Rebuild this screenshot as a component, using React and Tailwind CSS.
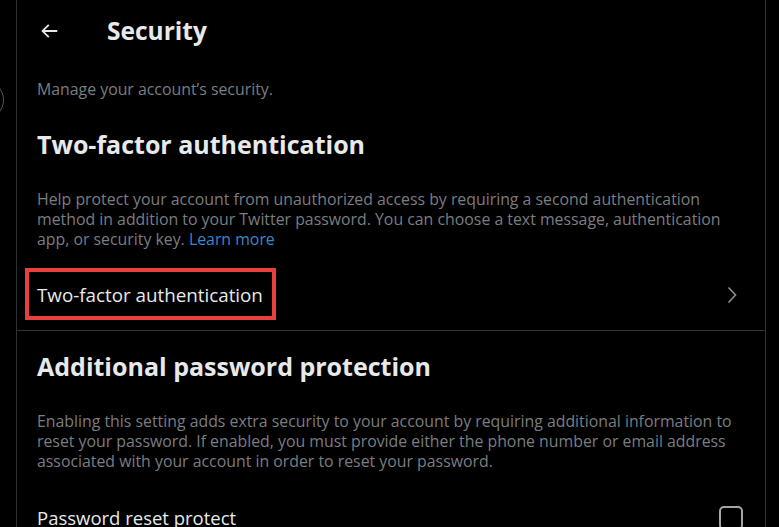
import React from 'react';

const font = { fontFamily: '"Open Sans", "Liberation Sans", sans-serif' };

function BackArrow() {
  return (
    <svg viewBox="0 0 24 24" className="w-[22px] h-[22px]" fill="#e7e9ea">
      <path d="M7.414 13l5.043 5.04-1.414 1.42L3.586 12l7.457-7.46 1.414 1.42L7.414 11H21v2H7.414z" />
    </svg>
  );
}

function Chevron() {
  return (
    <svg viewBox="0 0 10 18" className="w-[10px] h-[18px]" fill="none" stroke="#8b8f94" strokeWidth="1.6">
      <path d="M1.5 1.5l7 7.5-7 7.5" />
    </svg>
  );
}

export default function App() {
  return (
    <div className="w-[779px] h-[527px] overflow-hidden bg-black flex text-[#e7e9ea]" style={font}>
      {/* sidebar edge */}
      <div className="relative w-[16px] shrink-0">
        <div className="absolute left-[-36px] top-[80px] w-[40px] h-[40px] rounded-full border border-[#555]" />
      </div>

      <div className="w-[750px] shrink-0 border-l border-r border-[#2f3336]">
        {/* header */}
        <div className="h-[62px] flex items-center pl-[21px]">
          <BackArrow />
          <h1 className="ml-[47px] text-[24.5px] font-bold leading-[30px]">Security</h1>
        </div>

        <div className="px-[20px] pt-[17px]">
          <p className="text-[15.85px] leading-[20px] text-[#7a7d81]">Manage your account’s security.</p>

          <h2 className="mt-[30px] text-[25px] font-bold leading-[30px]">Two-factor authentication</h2>

          <p className="mt-[30px] text-[15.85px] leading-[20px] text-[#7a7d81] -mr-[4px]">
            Help protect your account from unauthorized access by requiring a second authentication
            method in addition to your Twitter password. You can choose a text message, authentication
            app, or security key. <span className="text-[#3f85c9]">Learn more</span>
          </p>
        </div>

        <div className="flex items-center justify-between pl-[20px] pr-[28px] pt-[34px] pb-[23px] border-b border-[#2f3336]">
          <span className="relative text-[18.8px] leading-[24px]">
            Two-factor authentication
            <span className="absolute -left-[12px] -right-[13px] -top-[15px] -bottom-[13px] border-[4px] border-[#e8403c]" />
          </span>
          <Chevron />
        </div>

        <div className="px-[20px] pt-[20px]">
          <h2 className="text-[25px] font-bold leading-[30px]">Additional password protection</h2>

          <p className="mt-[30px] text-[15.85px] leading-[20px] text-[#7a7d81] -mr-[4px]">
            Enabling this setting adds extra security to your account by requiring additional information to
            reset your password. If enabled, you must provide either the phone number or email address
            associated with your account in order to reset your password.
          </p>

          <div className="mt-[35px] flex items-start justify-between pr-[1px]">
            <span className="text-[18.5px] leading-[24px]">Password reset protect</span>
            <div className="mr-[1px] w-[24px] h-[24px] rounded-[5px] border-2 border-[#a3a5a8]" />
          </div>
        </div>
      </div>
    </div>
  );
}
